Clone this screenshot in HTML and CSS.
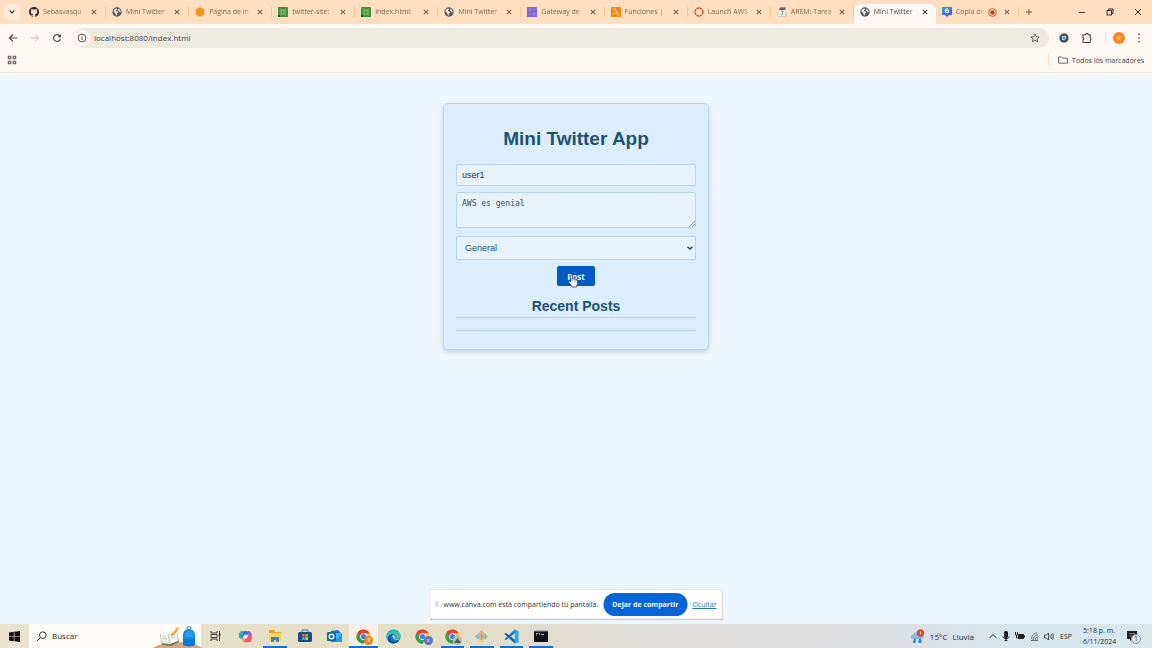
FILE: index.html
```html
<!DOCTYPE html>
<html lang="es">
<head>
<meta charset="utf-8">
<title>Mini Twitter App</title>
<link rel="stylesheet" href="styles.css">
</head>
<body class="desktop">
<svg class="defs" aria-hidden="true">
  <symbol id="x" viewBox="0 0 6 6"><path d="M.8.8l4.400 4.400M5.200.8L.8 5.200" fill="none" stroke="currentColor" stroke-width="1.100"/></symbol>
  <symbol id="globe" viewBox="0 0 16 16"><circle cx="8" cy="8" r="7.500" fill="#53606b"/><path d="M2.200 6.500C3 4 5 2.300 7.600 2.200l.6 1.600-1.800 1.400.3 1.500 2.600.6.500 2-1.800.7-.4 3.600C5.800 13.300 6 11 5.200 9.800zM10 2.800c2.500.9 3.900 3 3.800 5.600l-1.900-.7-1.900-1.800z" fill="#f6ead9"/></symbol>
  <symbol id="code" viewBox="0 0 10 10"><rect width="10" height="10" rx=".6" fill="#3f9138"/><path d="M3 3h4v4H3zM4.500 4.500h1" fill="none" stroke="#b9dba5" stroke-width=".7"/><path d="M2 2h1M7 2h1M2 8h1M7 8h1" stroke="#a4cf90" stroke-width=".7"/><path d="M0 8h1.500v2H0z" fill="#143f24"/></symbol>
  <symbol id="chrome" viewBox="0 0 16 16"><circle cx="8" cy="8" r="7.600" fill="#f8c32d"/><path d="M1.420 4.200A7.600 7.600 0 0 0 8 15.600l3.100-5.800L8 8 5 9.800z" fill="#2da052"/><path d="M1.420 4.200L5 9.800 8 4.400h6.580A7.600 7.600 0 0 0 1.420 4.200z" fill="#e34133"/><circle cx="8" cy="8" r="3.600" fill="#fff"/><circle cx="8" cy="8" r="2.800" fill="#3d7fe8"/></symbol>
</svg>

<header class="browser">
  <div class="tabstrip">
    <button class="tab-search" aria-label="Buscar pestañas"><svg viewBox="0 0 6 4" width="6" height="4"><path d="M.8.700L3 2.900 5.200.700" fill="none" stroke="#2b2620" stroke-width="1.200"/></svg></button>
    <nav class="tabs" aria-label="Pestañas">
      <div class="tab"><svg class="fav" viewBox="0 0 16 16"><path fill="#282a2c" d="M8 0C3.580 0 0 3.580 0 8c0 3.540 2.290 6.530 5.470 7.590.4.070.550-.170.550-.380v-1.490c-2.010.370-2.530-.490-2.690-.940-.09-.230-.480-.940-.820-1.130-.280-.150-.680-.520-.010-.530.630-.010 1.080.580 1.230.820.720 1.210 1.870.870 2.330.660.070-.520.280-.870.510-1.070-1.780-.2-3.640-.890-3.640-3.950 0-.870.310-1.590.820-2.150-.080-.2-.360-1.020.080-2.120 0 0 .670-.210 2.200.820a7.400 7.400 0 0 1 4 0c1.530-1.040 2.200-.820 2.200-.820.440 1.100.160 1.920.080 2.120.510.560.820 1.270.820 2.150 0 3.070-1.870 3.750-3.650 3.950.290.250.540.730.540 1.480v2.200c0 .210.150.460.550.380A8 8 0 0 0 16 8c0-4.420-3.580-8-8-8z"/></svg><span class="tab-label">Sebasvasqu</span><button class="close" aria-label="Cerrar"><svg><use href="#x"/></svg></button></div>
      <div class="tab"><svg class="fav"><use href="#globe"/></svg><span class="tab-label">Mini Twitter</span><button class="close" aria-label="Cerrar"><svg><use href="#x"/></svg></button></div>
      <div class="tab"><svg class="fav" viewBox="0 0 10 10"><path d="M5 .3l4.200 2v5.200L5 9.700.8 7.500V2.300z" fill="#f68b18"/><path d="M.8 2.300L5 4.200l4.200-1.900M5 4.200v5.400" stroke="#ffa83f" stroke-width=".5" fill="none"/></svg><span class="tab-label">Página de in</span><button class="close" aria-label="Cerrar"><svg><use href="#x"/></svg></button></div>
      <div class="tab"><svg class="fav"><use href="#code"/></svg><span class="tab-label">twitter-site:</span><button class="close" aria-label="Cerrar"><svg><use href="#x"/></svg></button></div>
      <div class="tab"><svg class="fav"><use href="#code"/></svg><span class="tab-label">index.html:</span><button class="close" aria-label="Cerrar"><svg><use href="#x"/></svg></button></div>
      <div class="tab"><svg class="fav"><use href="#globe"/></svg><span class="tab-label">Mini Twitter</span><button class="close" aria-label="Cerrar"><svg><use href="#x"/></svg></button></div>
      <div class="tab"><svg class="fav" viewBox="0 0 10 10"><rect width="10" height="10" rx=".6" fill="#8064d8"/><path d="M2 2h2v2H2zM6 6h2v2H6zM6 2.500h2M3 6v2" stroke="#a994ec" stroke-width=".7" fill="none"/></svg><span class="tab-label">Gateway de</span><button class="close" aria-label="Cerrar"><svg><use href="#x"/></svg></button></div>
      <div class="tab"><svg class="fav" viewBox="0 0 10 10"><rect width="10" height="10" rx=".6" fill="#f28a1c"/><path d="M2.500 2h1.800l2.600 6h1.300M4.300 5L2.500 8" fill="none" stroke="#ffd7a5" stroke-width=".9"/></svg><span class="tab-label">Funciones |</span><button class="close" aria-label="Cerrar"><svg><use href="#x"/></svg></button></div>
      <div class="tab"><svg class="fav" viewBox="0 0 10 10"><circle cx="5" cy="5" r="4" fill="none" stroke="#d94b26" stroke-width="1.400" stroke-dasharray="2.500 .64"/></svg><span class="tab-label">Launch AWS</span><button class="close" aria-label="Cerrar"><svg><use href="#x"/></svg></button></div>
      <div class="tab"><svg class="fav" viewBox="0 0 10 10"><path d="M1 3l2-2.500h5.500L9 3l.6 6.500H.5z" fill="#b9b8b4"/><path d="M3 .5h5.500L8 3H2z" fill="#5f6162"/><path d="M1 3h7.500v6H1z" fill="#ecebe7"/><path d="M4 4h2L5 8" stroke="#777" fill="none" stroke-width=".8"/></svg><span class="tab-label">AREM: Tarea</span><button class="close" aria-label="Cerrar"><svg><use href="#x"/></svg></button></div>
      <div class="tab tab-active"><svg class="fav"><use href="#globe"/></svg><span class="tab-label">Mini Twitter</span><button class="close" aria-label="Cerrar"><svg><use href="#x"/></svg></button></div>
      <div class="tab tab-recording"><svg class="fav" viewBox="0 0 10 10"><defs><linearGradient id="cv" x2="1" y2="1"><stop stop-color="#18aee0"/><stop offset="1" stop-color="#6a3be8"/></linearGradient></defs><path d="M1 0h8a1 1 0 0 1 1 1v6a1 1 0 0 1-1 1H7L5 10 3 8H1a1 1 0 0 1-1-1V1a1 1 0 0 1 1-1z" fill="url(#cv)"/><circle cx="5" cy="3.800" r="2.200" fill="#fff"/><path d="M4 4l1 1 1.500-2.500" fill="none" stroke="#4770e8" stroke-width=".8"/></svg><span class="tab-label">Copia de</span><svg class="rec" viewBox="0 0 8 8"><circle cx="4" cy="4" r="3.400" fill="none" stroke="#c8502d" stroke-width=".8"/><circle cx="4" cy="4" r="2" fill="#cc4020"/></svg><button class="close" aria-label="Cerrar"><svg><use href="#x"/></svg></button></div>
    </nav>
    <div class="window-area">
      <button class="plain" aria-label="Nueva pestaña"><svg width="8" height="8" viewBox="0 0 8 8"><path d="M4 1v6M1 4h6" stroke="#76502e" stroke-width="1"/></svg></button>
      <div class="window-controls">
        <button class="plain" aria-label="Minimizar"><svg width="8" height="8" viewBox="0 0 8 8"><path d="M1 4.500h6" stroke="#44352a"/></svg></button>
        <button class="plain" aria-label="Restaurar"><svg width="8" height="8" viewBox="0 0 8 8"><path d="M1 2.500h4.500V7H1zM2.500 2V1H7v4.500H6" fill="none" stroke="#382a20"/></svg></button>
        <button class="plain" aria-label="Cerrar ventana"><svg width="8" height="8" viewBox="0 0 8 8"><path d="M1 1l6 6M7 1L1 7" stroke="#382f2a"/></svg></button>
      </div>
    </div>
  </div>

  <div class="toolbar">
    <div class="nav-buttons">
      <button class="plain" aria-label="Atrás"><svg width="10" height="10" viewBox="0 0 10 10"><path d="M9 5H1.500M5 1.500L1.500 5 5 8.500" fill="none" stroke="#484844" stroke-width="1.100"/></svg></button>
      <button class="plain" aria-label="Adelante"><svg width="10" height="10" viewBox="0 0 10 10"><path d="M1 5h7.500M5 1.500L8.500 5 5 8.500" fill="none" stroke="#bbb9b2"/></svg></button>
      <button class="plain" aria-label="Recargar"><svg width="10" height="10" viewBox="0 0 10 10"><path d="M8.300 6A3.400 3.400 0 1 1 7.600 2.800L8.500 4" fill="none" stroke="#41413e" stroke-width="1.100"/><path d="M8.900 1v3.200H5.700z" fill="#41413e"/></svg></button>
    </div>
    <div class="omnibox">
      <button class="site-info" aria-label="Información del sitio"><svg width="10" height="10" viewBox="0 0 10 10"><circle cx="5" cy="5" r="3.900" fill="none" stroke="#484844" stroke-width=".9"/><path d="M5 4.500V7M5 2.700v1" stroke="#484844"/></svg></button>
      <input class="address" aria-label="Dirección" value="localhost:8080/index.html">
      <button class="plain" aria-label="Añadir a marcadores"><svg width="10" height="10" viewBox="0 0 10 10"><path d="M5 1l1.200 2.700 2.900.3-2.200 1.900.7 2.900L5 7.300 2.400 8.800l.7-2.900L.9 4l2.900-.3z" fill="none" stroke="#555550" stroke-width=".9"/></svg></button>
    </div>
    <div class="extensions">
      <button class="plain" aria-label="Extensión"><svg width="10" height="10" viewBox="0 0 10 10"><circle cx="5" cy="5" r="4.700" fill="#405264"/><path d="M3 3h4v2.500L5.500 7H3z" fill="#b9cbd5"/><path d="M4 5h2" stroke="#405264"/></svg></button>
      <button class="plain" aria-label="Extensiones"><svg width="12" height="12" viewBox="0 0 12 12"><path d="M2 2.700h2.600a1.300 1.300 0 0 1 2.600 0h2v3a1.300 1.300 0 0 1 0 2.400v2.400H2V8a1.300 1.300 0 0 0 0-2.500z" fill="none" stroke="#454541" stroke-width="1.100"/></svg></button>
      <span class="divider"></span>
      <button class="profile" aria-label="Perfil">R</button>
      <button class="plain" aria-label="Menú"><svg width="4" height="10" viewBox="0 0 4 10"><path d="M1.300.6h1.400V2H1.300zM1.300 4.300h1.400v1.400H1.300zM1.300 8h1.400v1.400H1.300z" fill="#454541"/></svg></button>
    </div>
  </div>

  <div class="bookmarks">
    <button class="plain" aria-label="Aplicaciones"><svg width="10" height="10" viewBox="0 0 10 10"><path d="M1.300 1.300h2.500v2.500H1.300zM6.200 1.300h2.500v2.500H6.200zM1.300 6.200h2.500v2.500H1.300zM6.200 6.200h2.500v2.500H6.200z" fill="none" stroke="#5b5a55" stroke-width="1.100"/></svg></button>
    <span class="divider"></span>
    <button class="all-bookmarks"><svg width="10" height="8" viewBox="0 0 10 8"><path d="M.6 1h3.200l1 1.200h4.600v5H.6z" fill="none" stroke="#5b5a55" stroke-width=".9"/></svg>Todos los marcadores</button>
  </div>
</header>

<main class="page">
  <form class="card">
    <h1 class="title">Mini Twitter App</h1>
    <input class="field user" aria-label="Usuario" value="user1">
    <div class="field-wrap message-wrap">
      <textarea class="field message" aria-label="Mensaje">AWS es genial</textarea>
      <svg class="grip" width="6" height="6" viewBox="0 0 6 6"><path d="M0 6l6-6M3 6l3-3" stroke="#6f8795" stroke-width=".8"/></svg>
    </div>
    <div class="field-wrap stream-wrap">
      <select class="field stream" aria-label="Hilo"><option>General</option></select>
      <svg class="chevron" width="6" height="4" viewBox="0 0 6 4"><path d="M.5.700L3 3 5.500.700" fill="none" stroke="#174c69" stroke-width="1.400"/></svg>
    </div>
    <div class="post-wrap">
      <button class="post" type="button">Post</button>
      <svg class="cursor" width="11" height="14" viewBox="0 0 11 14"><path d="M3 .8c.8-.5 1.600 0 1.600.9v3.200c.7-.4 1.400-.1 1.600.5.7-.4 1.400 0 1.600.6.9-.3 1.700.2 1.700 1.200V9.500c0 1.500-1.100 2.200-1.100 3.500H4.200C3.700 11.300 1.500 9.500.9 8.200c-.5-1 .4-1.600 1.200-1l.8.7V1.300z" fill="#fff" stroke="#3d4248" stroke-width=".8"/><path d="M4.600 5v2.500M6.200 5.500v2M7.800 6v2" stroke="#6a737a" stroke-width=".5"/></svg>
    </div>
    <h2 class="subtitle">Recent Posts</h2>
    <section class="posts" aria-label="Recent Posts"></section>
  </form>

  <aside class="sharing">
    <span class="handle"></span>
    <span class="sharing-text">www.canva.com está compartiendo tu pantalla.</span>
    <button class="stop">Dejar de compartir</button>
    <a class="hide" href="#">Ocultar</a>
  </aside>
</main>

<footer class="taskbar">
  <button class="start" aria-label="Inicio"><svg width="11" height="11" viewBox="0 0 11 11"><path d="M0 1.500L4.800.8v4.400H0zM5.400.7L11 0v5.200H5.400zM0 5.800h4.800v4.400L0 9.500zM5.400 5.800H11V11l-5.600-.7z" fill="#111"/></svg></button>
  <label class="search">
    <svg width="11" height="11" viewBox="0 0 11 11"><circle cx="6.800" cy="4.200" r="3.300" fill="none" stroke="#333"/><path d="M4.400 6.600L.8 10.200" stroke="#333"/></svg>
    <input class="search-input" aria-label="Buscar" value="Buscar">
    <svg class="search-art" width="48" height="22" viewBox="0 0 48 22"><path d="M0 22c8-5 16-6 24-6s17 1 24 5v1z" fill="#d4a886"/><path d="M7 8l8 1 9-3 2 10-8 4-9-1z" fill="#66805b"/><path d="M7 7l8 1 9-3 1 10-8 3-8-1z" fill="#f4f5ea"/><path d="M15 8l2 9M10 10l3 .5M18 9l4-1M10 12.500l4 .5M18 12l4-1" stroke="#a3b1a6" stroke-width=".7"/><path d="M17 9l6-6 2 2-6 5z" fill="#f8a53d"/><path d="M22 3l2-2 2 1-1 3z" fill="#f1c04e"/><path d="M30 9c0-8 12-8 12 0v9c0 3-12 3-12 0z" fill="#168ce5"/><path d="M32 8c0-4 8-4 8 0v3h-8z" fill="#2b9df0"/><path d="M30 12c4 2 8 2 12 0v6c0 3-12 3-12 0z" fill="#0a78da"/><path d="M34 3c0-3 4-3 4 0" fill="none" stroke="#1461a8"/></svg>
  </label>
  <nav class="apps" aria-label="Aplicaciones">
    <button class="app" aria-label="Vista de tareas"><svg width="11" height="10" viewBox="0 0 11 10"><path d="M1 0v2h6V0M1 10V8h6v2M1 3.500h6v3H1zM9.500 0v10" fill="none" stroke="#333" stroke-width=".9"/><path d="M8.700 2.500h1.800v2.200H8.700z" fill="#333"/></svg></button>
    <button class="app" aria-label="Copilot"><svg width="15" height="15" viewBox="0 0 16 16"><path d="M4 2h5c2 0 2 2 2.500 4H8C6 6 5.500 8 5 10H3C0 10 1 2 4 2z" fill="#2878db"/><path d="M1 8c0-3 1-6 3-6h3C5 4 5 10 3 10c-1 0-2-1-2-2z" fill="#22b7b5"/><path d="M12 14H7c-2 0-2-2-2.500-4H8c2 0 2.500-2 3-4h2c3 0 2 8-1 8z" fill="#ee5a68"/><path d="M4.500 10H8l-1.500 4C5 14 5 12 4.500 10z" fill="#f7a638"/><path d="M11 2c3 0 4 4 4 6-1-2-3-2-4-2-.3-2-.7-4-2-4z" fill="#9c5be4"/><path d="M7.500 6H10L8.500 10H6z" fill="#f4eee0"/></svg></button>
    <button class="app app-open" aria-label="Explorador"><svg width="14" height="14" viewBox="0 0 14 14"><path d="M1 1h5l1 2h6v4H1z" fill="#e8a52d"/><path d="M1 4h12v8H1z" fill="#ffd05b"/><path d="M3 8h8v5H8v-2H6v2H3z" fill="#3386cf"/></svg></button>
    <button class="app" aria-label="Tienda"><svg width="14" height="14" viewBox="0 0 14 14"><path d="M4 3V1h6v2" fill="none" stroke="#2785c9"/><rect y="3" width="14" height="10" rx="1.500" fill="#164f80"/><path d="M4 5h2.700v2.700H4z" fill="#ed5b42"/><path d="M7.300 5H10v2.700H7.300z" fill="#82bd48"/><path d="M4 8.300h2.700V11H4z" fill="#38ade6"/><path d="M7.300 8.300H10V11H7.300z" fill="#f7bd3d"/></svg></button>
    <button class="app" aria-label="Outlook"><svg width="15" height="14" viewBox="0 0 15 14"><path d="M4 2l7-1 4 4v8H4z" fill="#1479c8"/><path d="M5 4h9v4l-5 3z" fill="#43b9ee"/><path d="M4 13l11-7v7z" fill="#239be3"/><rect y="3" width="9" height="9" rx="1" fill="#0868b5"/><circle cx="4.500" cy="7.500" r="2.300" fill="none" stroke="#fff" stroke-width="1.400"/></svg></button>
    <button class="app app-open app-current" aria-label="Chrome"><svg width="15" height="15"><use href="#chrome"/></svg><span class="badge badge-orange">R</span></button>
    <button class="app" aria-label="Edge"><svg width="15" height="15" viewBox="0 0 16 16"><circle cx="8" cy="8" r="7.500" fill="#147ac5"/><path d="M1 6C3-1 15-1 15.500 7c0 4-5 4-6 2 1-1 1-4-2-4C4 5 1 8 2 12 0 10 0 8 1 6z" fill="#43c4a1"/><path d="M1 6C3 1 10 0 13 4 8 1 2 4 1 8z" fill="#2b9fe0"/><path d="M5 10c1 4 6 4 9 2-3 5-9 4-11 1-2-4 2-7 4-7-1 1-2 2-2 4z" fill="#12539d"/><path d="M7 7c1-1 3 0 2 2 0 2 2 3 6 1-3 3-8 2-8-3z" fill="#eaf5ef"/></svg></button>
    <button class="app" aria-label="Chrome, perfil 2"><svg width="15" height="15"><use href="#chrome"/></svg><span class="badge badge-blue">x</span></button>
    <button class="app app-open" aria-label="Chrome, perfil 3"><svg width="15" height="15"><use href="#chrome"/></svg><span class="badge badge-gray"><svg width="9" height="9" viewBox="0 0 9 9"><path d="M1 7l3.500-5L8 7z" fill="#565b5c"/></svg></span></button>
    <button class="app app-open" aria-label="Git"><svg width="15" height="15" viewBox="0 0 16 16"><path d="M8 1l3.500 3.500L8 8 4.500 4.500z" fill="#edac81"/><path d="M4.500 4.500L8 8l-3.500 3.500L1 8z" fill="#8dbbe4"/><path d="M11.500 4.500L15 8l-3.500 3.500L8 8z" fill="#94cc91"/><path d="M8 8l3.500 3.500L8 15l-3.500-3.500z" fill="#efd06f"/><path d="M6 5l4 4M8 7v4" stroke="#e97955"/><circle cx="8" cy="10.500" r="1" fill="#e97955"/></svg></button>
    <button class="app app-open" aria-label="Visual Studio Code"><svg width="15" height="15" viewBox="0 0 16 16"><path d="M11.500.5L15.500 2v12l-4 1.500z" fill="#30a7ee"/><path d="M11.500.5v4L2 12 .5 10.700z" fill="#167ccb"/><path d="M11.500 15.500v-4L2 4 .5 5.300z" fill="#0869b6"/></svg></button>
    <button class="app app-open" aria-label="Símbolo del sistema"><svg width="14" height="12" viewBox="0 0 14 12"><rect width="14" height="12" fill="#101112"/><path d="M0 0h14v1.500H0z" fill="#a5aaa9"/><path d="M2 3.500h2M2 5h1M5 3l1 2M7.500 4.500H10" stroke="#ddd" stroke-width=".8"/></svg></button>
  </nav>
  <div class="tray">
    <button class="weather"><svg width="15" height="15" viewBox="0 0 15 15"><path d="M3 10C0 10 0 6 3 6c1-4 7-4 8 0 4 0 4 4 0 4z" fill="#8bbbe3"/><path d="M5 9c-3 4-2 5-1 5s3-1 1-5zM10 9c-3 4-1 5 0 5s3-1 0-5z" fill="#1682d5"/><circle cx="10.500" cy="4" r="3.700" fill="#d95328"/><path d="M10.500 2.500v3" stroke="#ffd4bc" stroke-width=".8"/></svg><span>15°C</span><span>Lluvia</span></button>
    <div class="status">
      <svg width="8" height="6" viewBox="0 0 8 6"><path d="M.6 5L4 1.500 7.400 5" fill="none" stroke="#222"/></svg>
      <svg width="8" height="10" viewBox="0 0 8 10"><rect x="2" width="4" height="7" rx="1.500" fill="#191919"/><path d="M1 5.500c0 3 6 3 6 0M4 7v2.500M2.500 9.500h3" fill="none" stroke="#191919" stroke-width=".9"/></svg>
      <svg width="10" height="8" viewBox="0 0 10 8"><path d="M3.500 2.500h5v4h-5zM9.500 3.500v2" stroke="#222" fill="#222"/><path d="M.5 0v3h2V0M1.500 3v3h2" fill="none" stroke="#222" stroke-width=".9"/></svg>
      <svg width="9" height="9" viewBox="0 0 9 9"><path d="M1.500 7a6 6 0 0 1 6-6M3 8a5 5 0 0 1 5-5M5 8a3 3 0 0 1 3-3M1 8.500h7M7 8a1 1 0 0 1 1-1" fill="none" stroke="#4d555a" stroke-width=".8"/></svg>
      <svg width="10" height="9" viewBox="0 0 10 9"><path d="M.5 3h2l2-2v7l-2-2h-2z" fill="none" stroke="#30363a" stroke-width=".8"/><path d="M6 3q1 1.500 0 3M7.300 2q2 2.500 0 5M8.600 1q2 3.500 0 7" fill="none" stroke="#30363a" stroke-width=".7"/></svg>
    </div>
    <span class="language">ESP</span>
    <div class="clock"><span>5:18 p. m.</span><span>6/11/2024</span></div>
    <button class="notifications" aria-label="Notificaciones"><svg width="10" height="11" viewBox="0 0 10 11"><path d="M0 0h10v8H5L3 10V8H0z" fill="#202326"/><path d="M2 2.500h6M2 5h4" stroke="#8d999f" stroke-width=".8"/></svg><span class="count">1</span></button>
  </div>
</footer>
</body>
</html>
```
FILE: styles.css
```css
* { box-sizing: border-box; }

.desktop {
  margin: 0;
  min-height: 100vh;
  display: flex;
  flex-direction: column;
  font-family: "Open Sans", "Noto Sans", sans-serif;
  font-size: 7px;
  color: #47443d;
  background: #eef6fd;
}

.defs { position: absolute; width: 0; height: 0; }

svg { display: block; flex: none; }

button, input, select, textarea {
  margin: 0;
  padding: 0;
  border: 0;
  background: none;
  color: inherit;
  font: inherit;
  outline: none;
}

button { display: flex; align-items: center; justify-content: center; }

/* Browser chrome */
.browser { background: #fefaf3; border-bottom: 1px solid #f0e6d6; }

.tabstrip { display: flex; height: 24px; background: #ffdfc0; }

.tab-search {
  width: 16px;
  height: 16px;
  margin: 4px 3px 4px 4px;
  border-radius: 5px;
  background: #ffecd9;
}

.tabs { flex: 1; min-width: 0; display: flex; }

.tab {
  flex: 1;
  min-width: 0;
  display: flex;
  align-items: center;
  padding: 0 8px 0 6px;
  border-right: 1px solid #f5c98e;
  border-image: linear-gradient(transparent 30%, #f5c98e 30% 70%, transparent 70%) 1;
  color: #80664a;
}

.tab-active {
  margin-top: 4px;
  padding-bottom: 4px;
  border: 0;
  border-radius: 6px 6px 0 0;
  background: #fefaf3;
  color: #4a4741;
}

.fav { width: 10px; height: 10px; }

.tab-label {
  flex: 1;
  min-width: 0;
  margin: 0 3px 0 4px;
  overflow: hidden;
  white-space: nowrap;
  line-height: 12px;
  mask-image: linear-gradient(to right, #000 75%, #0004 95%);
}

.rec { width: 9px; height: 9px; margin-right: 7px; }

.close svg { width: 6px; height: 6px; }

.window-area {
  width: 133px;
  display: flex;
  align-items: center;
  justify-content: space-between;
  padding: 0 10px 0 6px;
}

.window-controls { display: flex; gap: 20px; }

.toolbar { display: flex; align-items: center; height: 28px; }

.nav-buttons { display: flex; gap: 12px; padding: 0 11px 0 8px; }

.omnibox {
  flex: 1;
  display: flex;
  align-items: center;
  height: 20px;
  padding: 0 9px 0 1px;
  border-radius: 10px;
  background: #edeae0;
}

.site-info { width: 16px; height: 16px; border-radius: 50%; background: #fefaf3; }

.address { flex: 1; min-width: 0; margin-left: 4px; padding-bottom: 2px; font-size: 8px; }

.extensions { display: flex; align-items: center; gap: 12px; padding: 0 11px 0 10px; }

.extensions .divider { margin-right: -5px; }

.divider { width: 1px; height: 10px; background: #f8dfc1; }

.profile {
  width: 12px;
  height: 12px;
  border-radius: 50%;
  background: #f28a1c;
  color: #ffd6a6;
}

.bookmarks { display: flex; align-items: center; height: 20px; padding: 0 8px 4px 7px; }

.bookmarks .divider { margin: 0 9px 0 auto; }

.all-bookmarks { gap: 4px; }

/* Web page */
.page {
  flex: 1;
  position: relative;
  padding: 30px 16px;
  background: #eef6fd;
  font-family: "Liberation Sans", Arial, sans-serif;
  color: #1b5276;
}

.card {
  max-width: 266px;
  margin: 0 auto;
  padding: 12px 12px 18px;
  border: 1px solid #b8d9ed;
  border-radius: 5px;
  background: #dceefb;
  box-shadow: 0 2px 4px #9ebacb99;
}

.title { margin: 11px 0 14px; font-size: 19px; line-height: 23px; text-align: center; }

.field {
  display: block;
  width: 100%;
  border: 1px solid #b8d6e8;
  border-radius: 2px;
  background: #e7f3fc;
}

.field-wrap { position: relative; }

.user { height: 22px; padding: 0 5px; font-size: 9px; color: #273139; }

.message-wrap { margin: 6px 0 8px; }

.message {
  height: 36px;
  padding: 6px 5px;
  font-family: "DejaVu Sans Mono", "Liberation Mono", monospace;
  font-size: 8px;
  line-height: 10px;
  resize: none;
}

.grip { position: absolute; right: 1px; bottom: 1px; }

.stream { height: 24px; padding: 0 8px; font-size: 9px; appearance: none; }

.chevron { position: absolute; right: 3px; top: 10px; pointer-events: none; }

.post-wrap { position: relative; width: 38px; margin: 6px auto 12px; }

.post {
  width: 100%;
  height: 20px;
  border-radius: 2px;
  background: #005bc8;
  color: #eef6ff;
  font-family: "Open Sans", sans-serif;
  font-size: 8px;
  font-weight: 700;
}

.cursor { position: absolute; left: 11px; top: 8px; }

.subtitle { margin: 0 0 3px; font-size: 14px; line-height: 16px; text-align: center; }

.posts { height: 14px; border: solid #b3d1e3; border-width: 1px 0; }

.sharing {
  position: absolute;
  left: 50%;
  bottom: 5px;
  transform: translateX(-50%);
  display: flex;
  align-items: center;
  height: 30px;
  padding: 0 5px;
  border: 1px solid #e6e8e9;
  background: #fefefd;
  box-shadow: 0 1px 1px #a9b5bd;
  font-family: "Open Sans", sans-serif;
  white-space: nowrap;
  color: #37393a;
}

.handle { width: 3px; height: 6px; margin-right: 5px; border: solid #c3c5c6; border-width: 0 1px; }

.stop {
  height: 23px;
  margin: 0 5px;
  padding: 0 9px;
  border-radius: 12px;
  background: #0565d8;
  color: #f4f9ff;
  font-weight: 700;
}

.hide { color: #2878bb; }

/* Taskbar */
.taskbar {
  display: flex;
  height: 24px;
  background: linear-gradient(to right, #ebe3ce 0%, #e5dfc6 35%, #e2dccb 44%, #dedcda 56%, #dedfe1 75%, #d5e6ee 90%, #d8e8ee 100%);
  font-size: 8px;
  color: #292b2d;
}

.start { width: 29px; }

.search { display: flex; align-items: center; width: 172px; padding-left: 7px; background: #fdfcf8; }

.search-input { flex: 1; min-width: 0; margin-left: 5px; padding-bottom: 1px; }

.search-art { align-self: flex-end; }

.apps { display: flex; width: 355px; }

.app { flex: 1; position: relative; }

.app-open::after {
  content: "";
  position: absolute;
  left: 3px;
  right: 3px;
  bottom: 0;
  height: 2px;
  background: #1770c5;
}

.app-current { background: #f6f1e7; }

.app-current::after { left: 0; right: 0; }

.badge {
  position: absolute;
  right: 5px;
  bottom: 3px;
  width: 9px;
  height: 9px;
  border-radius: 50%;
  font-size: 5px;
  line-height: 9px;
  color: #fff;
}

.badge-orange { background: #ee851d; }
.badge-blue { background: #5877c8; }
.badge-gray { background: #b9bdbd; }

.tray { display: flex; align-items: center; margin-left: auto; padding-right: 11px; }

.weather { gap: 5px; margin-right: 15px; }

.status { display: flex; align-items: center; gap: 5px; margin-right: 6px; }

.language { font-size: 7px; }

.clock {
  display: flex;
  flex-direction: column;
  width: 32px;
  margin: 0 12px 0 11px;
  text-align: center;
  white-space: nowrap;
  font-size: 7px;
  line-height: 11px;
}

.notifications { position: relative; width: 14px; height: 16px; justify-content: flex-start; }

.count {
  position: absolute;
  right: 0;
  bottom: 0;
  width: 10px;
  height: 10px;
  border: 1px solid #858b8f;
  border-radius: 50%;
  background: #e1e8ec;
  font-size: 7px;
  line-height: 8px;
}
```
